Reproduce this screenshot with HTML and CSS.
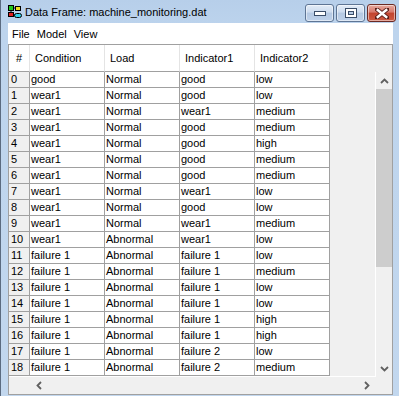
FILE: index.html
```html
<!DOCTYPE html>
<html>
<head>
<meta charset="utf-8">
<link rel="stylesheet" href="styles.css">
</head>
<body>
<div class="window">
  <div class="titlebar">
    <svg class="appicon" width="14" height="14" viewBox="0 0 14 14">
      <path d="M3 3 H10 M3 3 V10 M3 10 H9" stroke="#000" stroke-width="1" fill="none"/>
      <rect x="0.5" y="0.5" width="5" height="5" fill="#1ec81e" stroke="#000" stroke-width="1"/>
      <rect x="7.5" y="1.5" width="5" height="4" fill="#f0e020" stroke="#000" stroke-width="1"/>
      <rect x="0.5" y="7.5" width="5" height="4" fill="#e02020" stroke="#000" stroke-width="1"/>
      <rect x="6.5" y="8.5" width="7" height="4" rx="2" fill="#30d0e8" stroke="#000" stroke-width="1"/>
    </svg>
    <span class="title">Data Frame: machine_monitoring.dat</span>
    <div class="caption-buttons">
      <div class="cbtn">
        <svg width="12" height="5" viewBox="0 0 12 5"><rect x="0.5" y="0.5" width="11" height="4" fill="#fff" stroke="#3a4d68"/></svg>
      </div>
      <div class="cbtn">
        <svg width="12" height="10" viewBox="0 0 12 10"><rect x="0.5" y="0.5" width="11" height="9" fill="#fff" stroke="#3a4d68"/><rect x="3.5" y="3.5" width="5" height="3" fill="#b7cbe4" stroke="#3a4d68"/></svg>
      </div>
      <div class="cbtn close">
        <svg width="14" height="11" viewBox="0 0 14 11"><path d="M1.5 1 L12.5 10 M12.5 1 L1.5 10" stroke="#5a1f1a" stroke-width="4.2" stroke-linecap="square"/><path d="M1.8 1.3 L12.2 9.7 M12.2 1.3 L1.8 9.7" stroke="#fff" stroke-width="2.4"/></svg>
      </div>
    </div>
  </div>
  <div class="client">
    <div class="menubar">
      <span class="menuitem">File</span>
      <span class="menuitem">Model</span>
      <span class="menuitem">View</span>
    </div>
    <div class="panel">
      <div class="header">
        <div class="hcell idx">#</div>
        <div class="hcell">Condition</div>
        <div class="hcell">Load</div>
        <div class="hcell">Indicator1</div>
        <div class="hcell">Indicator2</div>
      </div>
      <div class="body">
        <div class="viewport">
          <div class="row"><div class="cell idx">0</div><div class="cell">good</div><div class="cell">Normal</div><div class="cell">good</div><div class="cell">low</div></div>
          <div class="row"><div class="cell idx">1</div><div class="cell">wear1</div><div class="cell">Normal</div><div class="cell">good</div><div class="cell">low</div></div>
          <div class="row"><div class="cell idx">2</div><div class="cell">wear1</div><div class="cell">Normal</div><div class="cell">wear1</div><div class="cell">medium</div></div>
          <div class="row"><div class="cell idx">3</div><div class="cell">wear1</div><div class="cell">Normal</div><div class="cell">good</div><div class="cell">medium</div></div>
          <div class="row"><div class="cell idx">4</div><div class="cell">wear1</div><div class="cell">Normal</div><div class="cell">good</div><div class="cell">high</div></div>
          <div class="row"><div class="cell idx">5</div><div class="cell">wear1</div><div class="cell">Normal</div><div class="cell">good</div><div class="cell">medium</div></div>
          <div class="row"><div class="cell idx">6</div><div class="cell">wear1</div><div class="cell">Normal</div><div class="cell">good</div><div class="cell">medium</div></div>
          <div class="row"><div class="cell idx">7</div><div class="cell">wear1</div><div class="cell">Normal</div><div class="cell">wear1</div><div class="cell">low</div></div>
          <div class="row"><div class="cell idx">8</div><div class="cell">wear1</div><div class="cell">Normal</div><div class="cell">good</div><div class="cell">low</div></div>
          <div class="row"><div class="cell idx">9</div><div class="cell">wear1</div><div class="cell">Normal</div><div class="cell">wear1</div><div class="cell">medium</div></div>
          <div class="row"><div class="cell idx">10</div><div class="cell">wear1</div><div class="cell">Abnormal</div><div class="cell">wear1</div><div class="cell">low</div></div>
          <div class="row"><div class="cell idx">11</div><div class="cell">failure 1</div><div class="cell">Abnormal</div><div class="cell">failure 1</div><div class="cell">low</div></div>
          <div class="row"><div class="cell idx">12</div><div class="cell">failure 1</div><div class="cell">Abnormal</div><div class="cell">failure 1</div><div class="cell">medium</div></div>
          <div class="row"><div class="cell idx">13</div><div class="cell">failure 1</div><div class="cell">Abnormal</div><div class="cell">failure 1</div><div class="cell">low</div></div>
          <div class="row"><div class="cell idx">14</div><div class="cell">failure 1</div><div class="cell">Abnormal</div><div class="cell">failure 1</div><div class="cell">low</div></div>
          <div class="row"><div class="cell idx">15</div><div class="cell">failure 1</div><div class="cell">Abnormal</div><div class="cell">failure 1</div><div class="cell">high</div></div>
          <div class="row"><div class="cell idx">16</div><div class="cell">failure 1</div><div class="cell">Abnormal</div><div class="cell">failure 1</div><div class="cell">high</div></div>
          <div class="row"><div class="cell idx">17</div><div class="cell">failure 1</div><div class="cell">Abnormal</div><div class="cell">failure 2</div><div class="cell">low</div></div>
          <div class="row"><div class="cell idx">18</div><div class="cell">failure 1</div><div class="cell">Abnormal</div><div class="cell">failure 2</div><div class="cell">medium</div></div>
        </div>
        <div class="vscroll">
          <div class="sbtn"><svg width="9" height="6" viewBox="0 0 9 6"><path d="M1 5 L4.5 1.5 L8 5" stroke="#606060" stroke-width="1.8" fill="none"/></svg></div>
          <div class="vthumb"></div>
          <div class="vtrack"></div>
          <div class="sbtn"><svg width="9" height="6" viewBox="0 0 9 6"><path d="M1 1 L4.5 4.5 L8 1" stroke="#606060" stroke-width="1.8" fill="none"/></svg></div>
        </div>
      </div>
      <div class="hscroll">
        <div class="hspacer"></div>
        <div class="sbtn h"><svg width="6" height="9" viewBox="0 0 6 9"><path d="M5 1 L1.5 4.5 L5 8" stroke="#606060" stroke-width="1.8" fill="none"/></svg></div>
        <div class="htrack"></div>
        <div class="sbtn h"><svg width="6" height="9" viewBox="0 0 6 9"><path d="M1 1 L4.5 4.5 L1 8" stroke="#606060" stroke-width="1.8" fill="none"/></svg></div>
        <div class="corner"></div>
      </div>
    </div>
  </div>
</div>
</body>
</html>
```
FILE: styles.css
```css
html, body {
  margin: 0;
  padding: 0;
  background: #b9d1ea;
}

.window {
  width: 398px;
  height: 396px;
  border-left: 1px solid #5b6b80;
  background: linear-gradient(#b7cfea, #bdd4ed 30px, #c2d7ee);
  display: flex;
  flex-direction: column;
  overflow: hidden;
}

.titlebar {
  height: 23px;
  display: flex;
  align-items: flex-start;
  flex: none;
}

.appicon {
  margin: 5px 0 0 7px;
  flex: none;
}

.title {
  margin-left: 3px;
  margin-top: 4px;
  font-family: "Liberation Sans", Arial, sans-serif;
  font-size: 11px;
  line-height: 16px;
  color: #000;
  white-space: nowrap;
}

.caption-buttons {
  margin-left: auto;
  margin-top: 4px;
  margin-right: 3px;
  display: flex;
  gap: 2px;
}

.cbtn {
  width: 27px;
  height: 16px;
  border: 1px solid #5e7594;
  border-radius: 3px;
  background: linear-gradient(#e3ecf7, #cddcef 45%, #b5c9e3 50%, #bfd2ea);
  display: flex;
  align-items: center;
  justify-content: center;
  box-shadow: inset 0 0 0 1px rgba(255,255,255,0.5);
}

.cbtn.close {
  border-color: #6b2a24;
  background: linear-gradient(#e6a99f, #d7796c 45%, #c2442f 50%, #cd5a43);
}

.client {
  margin-left: 7px;
  width: 385px;
  height: 372px;
  display: flex;
  flex-direction: column;
  flex: none;
}

.menubar {
  height: 21px;
  background: #fff;
  display: flex;
  align-items: center;
  padding-left: 0.5px;
  font-family: "Liberation Sans", Arial, sans-serif;
  font-size: 11px;
  color: #000;
  flex: none;
}

.menuitem {
  padding: 0 3.5px;
}

.panel {
  flex: none;
  height: 349px;
  border: 1px solid #a0a0a0;
  background: #f0f0f0;
  display: flex;
  flex-direction: column;
  font-family: "Liberation Sans", Arial, sans-serif;
  font-size: 11px;
  color: #000;
}

.header {
  height: 27px;
  display: flex;
  flex: none;
}

.hcell {
  height: 26px;
  border-right: 1px solid #e4e4e4;
  border-bottom: 1px solid #a0a0a0;
  background: #fff;
  line-height: 27px;
  padding-left: 5px;
  width: 69px;
}

.hcell.idx {
  width: 20px;
  padding-left: 0;
  text-align: center;
}

.body {
  height: 305px;
  display: flex;
  flex: none;
}

.viewport {
  width: 366px;
  height: 304px;
  border-right: 1px solid #fff;
  border-bottom: 1px solid #fff;
  background: #f0f0f0;
  flex: none;
}

.row {
  display: flex;
  height: 15px;
  border-bottom: 1px solid #a0a0a0;
  width: 321px;
}

.cell {
  width: 73px;
  padding-left: 1px;
  height: 15px;
  line-height: 15px;
  border-right: 1px solid #a0a0a0;
  background: #fff;
  white-space: nowrap;
  overflow: hidden;
}

.cell.idx {
  width: 18px;
  padding-left: 2px;
  background: #f0f0f0;
}

.vscroll {
  width: 16px;
  height: 305px;
  display: flex;
  flex-direction: column;
  background: #f0f0f0;
}

.sbtn {
  height: 17px;
  display: flex;
  align-items: center;
  justify-content: center;
  flex: none;
}

.sbtn.h {
  width: 17px;
  height: 17px;
}

.vthumb {
  height: 178px;
  background: #cdcdcd;
  flex: none;
}

.vtrack {
  flex: 1;
}

.hscroll {
  height: 17px;
  display: flex;
  flex: none;
}

.hspacer {
  width: 21px;
}

.htrack {
  width: 311px;
}

.corner {
  flex: 1;
}
```
